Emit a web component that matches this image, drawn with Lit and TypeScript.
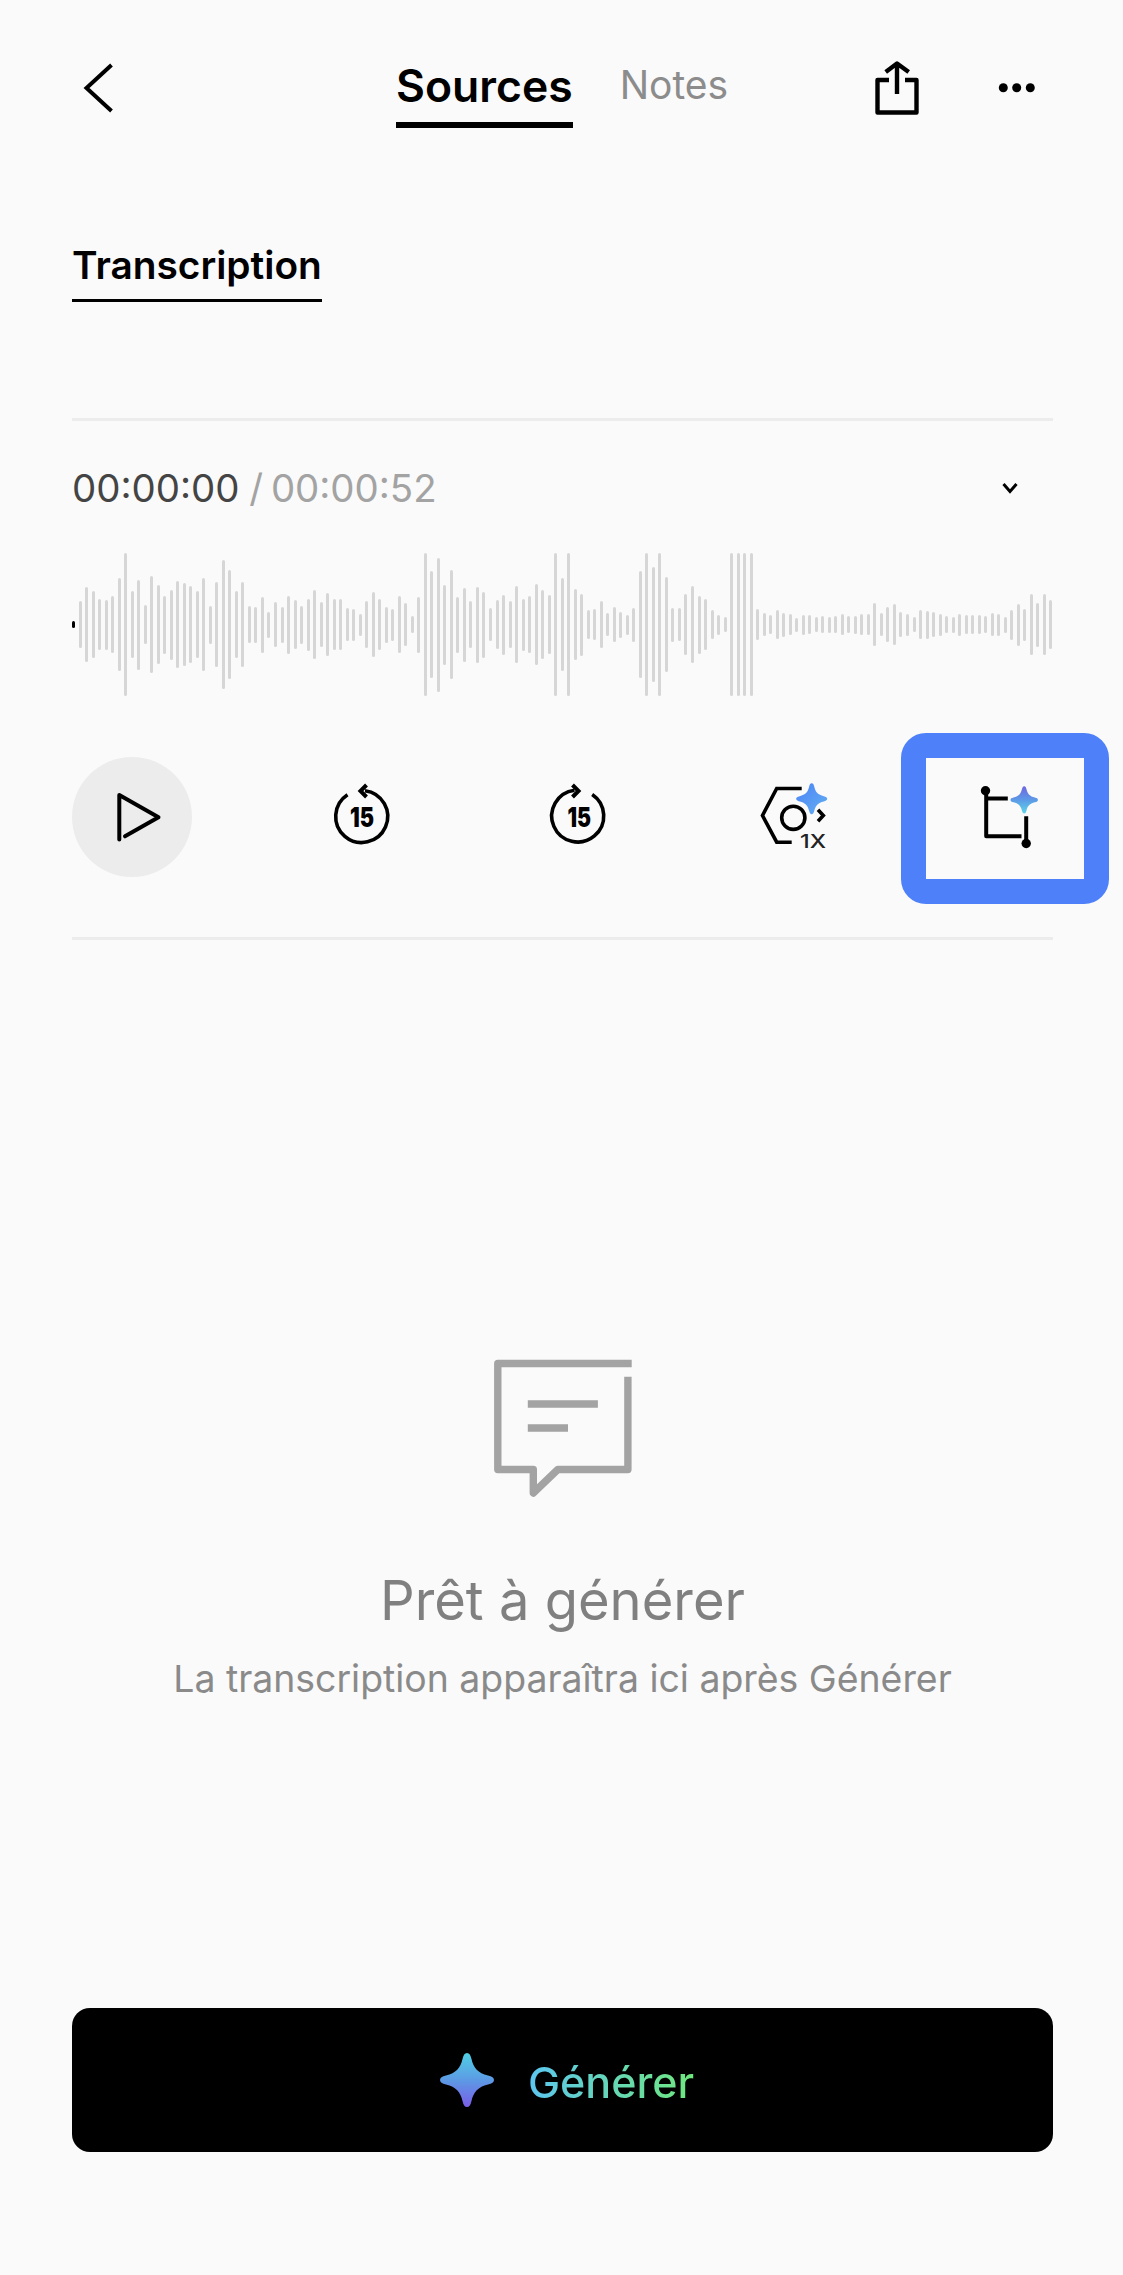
import { LitElement, html, css, svg } from "lit";
import { customElement } from "lit/decorators.js";

const WAVE = [7,47,75,67,51,50,57,93,143,67,90,39,97,79,58,70,87,83,77,67,93,38,85,129,109,67,85,37,36,56,26,45,36,58,49,38,52,69,45,63,51,51,33,32,22,47,65,51,36,32,57,43,17,56,143,107,134,80,109,56,74,47,76,66,33,49,60,47,77,52,57,81,69,59,143,93,143,71,62,29,31,47,23,35,26,20,34,107,143,115,143,95,34,33,61,77,58,51,29,20,15,143,143,143,143,31,23,19,29,24,21,14,20,19,15,17,16,17,21,17,18,21,21,43,23,35,41,25,22,15,29,28,25,22,17,16,22,19,19,19,17,23,22,16,30,42,32,61,44,61,49];

const STAR = "M0,-27 C2.5,-27 3.5,-25 4.5,-21 C6.5,-12 11,-7 21,-4.5 C25,-3.5 27,-2.5 27,0 C27,2.5 25,3.5 21,4.5 C11,7 6.5,12 4.5,21 C3.5,25 2.5,27 0,27 C-2.5,27 -3.5,25 -4.5,21 C-6.5,12 -11,7 -21,4.5 C-25,3.5 -27,2.5 -27,0 C-27,-2.5 -25,-3.5 -21,-4.5 C-11,-7 -6.5,-12 -4.5,-21 C-3.5,-25 -2.5,-27 0,-27 Z";

const star = (id: string, cx: number, cy: number, r: number, stops: string[], dir = "0 0 0 1") => {
  const [x1, y1, x2, y2] = dir.split(" ");
  return svg`<defs><linearGradient id=${id} x1=${x1} y1=${y1} x2=${x2} y2=${y2}>
    ${stops.map((c, i) => svg`<stop offset=${i / (stops.length - 1)} stop-color=${c}></stop>`)}
  </linearGradient></defs>
  <path d=${STAR} fill=${`url(#${id})`} transform=${`translate(${cx} ${cy}) scale(${r / 27})`}></path>`;
};

@customElement("app-root")
export class AppRoot extends LitElement {
  static styles = css`
    :host { display: block; font-family: Inter, "Liberation Sans", sans-serif; }
    .page { box-sizing: border-box; width: 1123px; min-height: 2275px; background: #fafafa; padding: 0 70px 0 72px; display: flex; flex-direction: column; align-items: stretch; }
    svg { display: block; flex: none; overflow: visible; }
    .header { height: 128px; display: grid; grid-template-columns: 324px auto 1fr; align-items: start; }
    .tabs { display: flex; gap: 47px; padding-top: 60px; }
    .tab-on { font-size: 44.5px; line-height: 52px; font-weight: 600; color: #000; padding-bottom: 10px; border-bottom: 6px solid #000; }
    .tab-off { font-size: 39px; line-height: 46px; color: #8c8c8c; margin-top: 1.5px; }
    .actions { justify-self: end; margin-right: 1px; }
    .sub-tab { align-self: flex-start; margin-top: 114px; font-size: 38.8px; line-height: 46px; font-weight: 600; color: #000; padding-bottom: 11px; border-bottom: 3px solid #000; }
    .rule { height: 3px; background: #ececec; }
    .rule-a { margin-top: 116px; }
    .rule-b { margin-top: 33px; }
    .time-row { margin-top: 41px; height: 50px; display: flex; align-items: center; justify-content: space-between; font-size: 38.4px; line-height: 50px; }
    .clock { padding-top: 1px; }
    .now { color: #444; }
    .sep { color: #a3a3a3; margin: 0 -3px 0 -1px; }
    .total { color: #a3a3a3; }
    .wave { margin-top: 41px; height: 143px; display: flex; align-items: center; justify-content: space-between; }
    .bar { width: 3px; border-radius: 1.5px; background: #d6d6d6; }
    .bar.head { background: #000; }
    .controls { margin-top: 37px; height: 171px; display: grid; grid-template-columns: 182px 216px 215px 216px 208px; align-items: center; justify-items: center; }
    .play { justify-self: start; width: 120px; height: 120px; margin-bottom: 3px; border-radius: 50%; background: #ececec; display: flex; align-items: center; justify-content: center; }
    .crop { box-sizing: border-box; width: 208px; height: 171px; border: 25px solid #4d80f9; border-radius: 25px; display: flex; align-items: center; justify-content: center; }
    .empty { margin-top: 420px; display: flex; flex-direction: column; align-items: center; }
    .title { margin-top: 69px; font-size: 54.3px; line-height: 68px; color: #808080; }
    .hint { margin-top: 22px; font-size: 37.4px; line-height: 46px; color: #8a8a8a; }
    .cta { margin-top: 306px; height: 144px; border-radius: 18px; background: #000; display: flex; align-items: center; justify-content: center; gap: 34px; padding-left: 9px; }
    .cta-text { font-size: 43px; line-height: 50px; font-weight: 500; margin-top: 4px; color: transparent; background: linear-gradient(90deg, #5cc6f0, #6fe87d); -webkit-background-clip: text; background-clip: text; }
    .num { font-family: Inter, sans-serif; font-weight: 900; font-size: 27px; fill: #000; }
    .speed { font-family: Inter, sans-serif; font-size: 19px; font-weight: 500; fill: #222; }
  `;

  render() {
    return html`<div class="page">
      <header class="header">
        <svg width="44" height="128" viewBox="72 0 44 128" fill="none" stroke="#000" stroke-width="4"><path d="M111.5 65 L86.5 88 L111.5 111"></path></svg>
        <div class="tabs"><div class="tab-on">Sources</div><div class="tab-off">Notes</div></div>
        <svg class="actions" width="176" height="128" viewBox="876 0 176 128" fill="none">
          <path d="M889 80 H877.5 V112.5 H916.5 V80 H905 M897 94 V64 M885.7 72 L897 63.5 L908.7 72" stroke="#000" stroke-width="4.4" stroke-linejoin="round"></path>
          <circle cx="1003.3" cy="87.7" r="4.5" fill="#000"></circle><circle cx="1016.7" cy="87.7" r="4.5" fill="#000"></circle><circle cx="1030.3" cy="87.7" r="4.5" fill="#000"></circle>
        </svg>
      </header>

      <div class="sub-tab">Transcription</div>
      <div class="rule rule-a"></div>

      <div class="time-row">
        <div class="clock"><span class="now">00:00:00</span><span class="sep"> / </span><span class="total">00:00:52</span></div>
        <svg width="51" height="50" viewBox="1002 462 51 50" fill="none" stroke="#000" stroke-width="3"><path d="M1003.5 484 L1010 491.5 L1016.5 484"></path></svg>
      </div>

      <div class="wave">
        ${WAVE.map((h, i) => html`<div class="bar ${i === 0 ? "head" : ""}" style="height:${h}px"></div>`)}
      </div>

      <div class="controls">
        <div class="play">
          <svg width="60" height="60" viewBox="102 787 60 60" fill="none" stroke="#000" stroke-width="4" stroke-linejoin="round" stroke-linecap="round">
            <path d="M119.3 839.5 V795 L158.5 817.3 L125 836.3"></path>
          </svg>
        </div>
        <svg width="80" height="80" viewBox="322 778.5 80 80" fill="none">
          <path d="M347.5 794.2 A26 26 0 1 0 365 790.2" stroke="#000" stroke-width="3.6"></path>
          <path d="M366.5 784.5 L360.5 790.5 L366.5 796.5" stroke="#000" stroke-width="4"></path>
          <text class="num" x="350" y="826.5" textLength="24" lengthAdjust="spacingAndGlyphs">15</text>
        </svg>
        <svg width="80" height="80" viewBox="537.5 778.5 80 80" fill="none">
          <path d="M591.7 793.9 A26 26 0 1 1 574 789.7" stroke="#000" stroke-width="3.6"></path>
          <path d="M572 784.5 L578 790.5 L572 796.5" stroke="#000" stroke-width="4"></path>
          <text class="num" x="567" y="826" textLength="23.5" lengthAdjust="spacingAndGlyphs">15</text>
        </svg>
        <svg width="80" height="80" viewBox="753 778.5 80 80" fill="none">
          <path d="M801.7 788 H776.7 L762.5 815 L776.7 841.7 H791.7" stroke="#000" stroke-width="3.6"></path>
          <circle cx="793.3" cy="817.3" r="11.6" stroke="#000" stroke-width="3.6"></circle>
          <path d="M818 809.3 L823.3 815 L818 820.7" stroke="#000" stroke-width="3.6"></path>
          ${star("spd", 811.7, 798.3, 15.5, ["#4d82f6", "#62b0f2"], "0 0 1 1")}
          <text class="speed" x="800" y="847.5" textLength="26" lengthAdjust="spacingAndGlyphs">1X</text>
        </svg>
        <div class="crop">
          <svg width="80" height="80" viewBox="965.5 778.8 80 80" fill="none">
            <path d="M986.7 791 V836 H1022 M986.7 798.3 H1008.3 M1026.7 816 V843" stroke="#000" stroke-width="4" stroke-linejoin="round"></path>
            <circle cx="986" cy="790.5" r="4.7" fill="#000"></circle>
            <circle cx="1026.7" cy="843.3" r="4.7" fill="#000"></circle>
            ${star("crp", 1024.7, 799.7, 13.7, ["#6f66e0", "#5c9ae6", "#5ed6ea"])}
          </svg>
        </div>
      </div>
      <div class="rule rule-b"></div>

      <div class="empty">
        <svg width="138" height="137" viewBox="493.7 1360 138 137" fill="none">
          <path d="M627.6 1376.7 V1469.5 H557.5 L533 1493 V1469.5 H497.5 V1363.5 H631.4" stroke="#a3a3a3" stroke-width="7.4" stroke-linejoin="round"></path>
          <path d="M527.5 1404 H597.6 M527.5 1428 H567.7" stroke="#a3a3a3" stroke-width="7.6"></path>
        </svg>
        <div class="title">Prêt à générer</div>
        <div class="hint">La transcription apparaîtra ici après Générer</div>
      </div>

      <div class="cta">
        <svg width="54" height="54" viewBox="440.7 2053 54 54">
          ${star("gen", 467.7, 2080, 27, ["#4fd0e4", "#5c9ae4", "#7a5ee8"])}
        </svg>
        <div class="cta-text">Générer</div>
      </div>
    </div>`;
  }
}
